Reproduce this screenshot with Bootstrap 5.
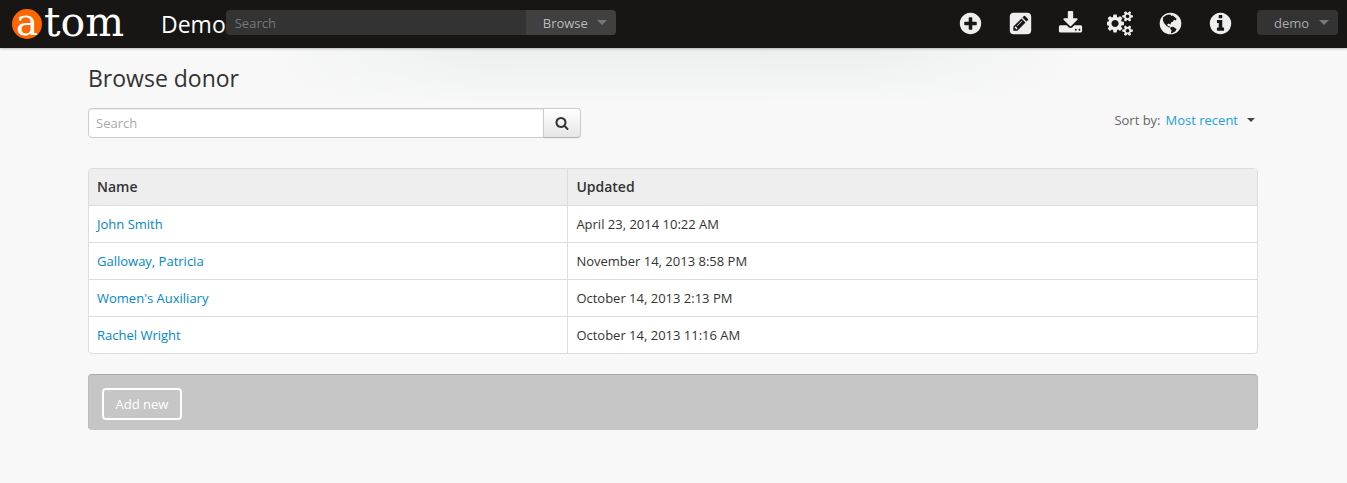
<!DOCTYPE html>
<html lang="en">
<head>
<meta charset="utf-8">
<meta name="viewport" content="width=device-width, initial-scale=1">
<title>Browse donor</title>
<link href="https://cdn.jsdelivr.net/npm/bootstrap@5.3.0/dist/css/bootstrap.min.css" rel="stylesheet">
<style>
body { font-family: "Open Sans", "Noto Sans", sans-serif; font-size: 13px; line-height: 20px; color: #333; background: #f8f8f8; }
a { text-decoration: none; color: #08c; }
.top-bar { background: #171614; height: 48px; padding: 0 9px 0 12px; box-shadow: 0 1px 2px rgba(0,0,0,.25); position: relative; z-index: 1; }
.logo { width: 120px; height: 48px; display: block; overflow: visible; }
.site-title { font-size: 23px; line-height: 32px; color: #fff; margin-left: 29px; }
.site-title:hover { color: #fff; }
.top-search { width: 390px; height: 25px; margin-bottom: 3px; }
.top-search input { background: #333; color: #ccc; border: 0; border-radius: 4px 0 0 4px; padding: 0 9px; min-width: 0; }
.top-search input::placeholder { color: #777; }
.dark-btn { border: 0; height: 25px; padding: 0 9px 0 17px; line-height: 24px; color: #aaa; background: #333; border-radius: 4px; }
.browse-btn { width: 90px; background: #404040; color: #bbb; border-radius: 0 4px 4px 0; }
.tri { width: 0; height: 0; border: 5px solid transparent; border-top-color: #777; border-bottom: 0; }
.user-btn { width: 81px; margin: 0 0 3px 12px; }
.icon-btn { width: 50px; height: 46px; margin-bottom: 2px; padding: 0; border: 0; background: none; color: #eee; }
.icon-btn svg { height: 25px; fill: currentColor; }
.glow { background: linear-gradient(90deg, #f8f8f8 20%, #f8f8f800 36%, #f8f8f800 64%, #f8f8f8 80%), linear-gradient(#eceeee, #f2f3f3 28px, #f8f8f8 55px); }
.page-area { max-width: 1195px; padding: 15px 13px 0 12px; }
h1 { font-size: 23px; line-height: 30px; margin: 0 0 15px; }
.list-search { width: 493px; max-width: 100%; height: 30px; }
.list-search input { border: 1px solid #ccc; border-radius: 4px 0 0 4px; padding: 0 7px; min-width: 0; background: #fff; box-shadow: inset 0 1px 1px rgba(0,0,0,.075); }
.list-search input::placeholder { color: #aaa; }
.list-search button { width: 38px; margin-left: -1px; border: 1px solid #ccc; border-bottom-color: #b3b3b3; border-radius: 0 4px 4px 0; padding: 0; background: linear-gradient(#fff, #e6e6e6); box-shadow: 0 1px 2px rgba(0,0,0,.05); }
.list-search svg { width: 14px; fill: #333; display: block; margin: 0 auto; }
.sort { color: #666; padding: 2px 3px 0 0; gap: 5px; }
.sort a { color: #1a9fdc; }
.sort .tri { border-width: 4px; border-top-color: #444; border-bottom: 0; margin-left: 4px; }
.donors { border: 1px solid #ddd; border-radius: 4px; background: #fff; overflow: hidden; margin: 30px 0 20px; }
.donors table { width: 100%; }
.donors th, .donors td { padding: 8px; border-top: 1px solid #ddd; }
.donors tr > * + * { border-left: 1px solid #ddd; }
.donors th { background: #eee; border-top: 0; font-size: 14px; font-weight: 600; }
.donors th:first-child { width: 41%; }
.actions { background: #c6c6c6; border: 1px solid #bcbcbc; border-color: #aaa #bcbcbc #c6c6c6; border-radius: 4px; padding: 13px; }
.add-btn { width: 80px; height: 32px; margin-bottom: -4px; border: 2px solid #fff; border-radius: 4px; background: none; color: #fff; padding: 0; display: block; }
.actions { min-height: 56px; }
</style>
</head>
<body>
<header class="top-bar d-flex align-items-center">
  <a href="#" aria-label="atom">
    <svg class="logo" viewBox="0 0 120 48" font-family="DejaVu Serif, serif" fill="#fff">
      <circle cx="15" cy="24" r="15" fill="#f60"/>
      <text x="4" y="35" font-size="37">a</text>
      <text x="32" y="36" font-size="41">tom</text>
    </svg>
  </a>
  <a class="site-title" href="#">Demo</a>
  <form class="top-search d-flex">
    <input class="flex-grow-1" type="text" placeholder="Search" aria-label="Global search">
    <button class="dark-btn browse-btn d-flex align-items-center justify-content-between" type="button">Browse <span class="tri"></span></button>
  </form>
  <nav class="d-flex align-items-center ms-auto">
    <button class="icon-btn" aria-label="Add"><svg viewBox="0 0 1792 1792"><path d="M1344 960v-128q0-26-19-45t-45-19h-256v-256q0-26-19-45t-45-19h-128q-26 0-45 19t-19 45v256h-256q-26 0-45 19t-19 45v128q0 26 19 45t45 19h256v256q0 26 19 45t45 19h128q26 0 45-19t19-45v-256h256q26 0 45-19t19-45zm320-64q0 209-103 385.5t-279.5 279.5-385.5 103-385.5-103-279.5-279.5-103-385.5 103-385.5 279.5-279.5 385.5-103 385.5 103 279.5 279.5 103 385.5z"/></svg></button>
    <button class="icon-btn" aria-label="Manage"><svg viewBox="0 0 1792 1792"><path fill-rule="evenodd" d="M416 128h960q288 0 288 288v960q0 288-288 288h-960q-288 0-288-288v-960q0-288 288-288zM384 1408h290l582-582-290-290-582 582zM1034 468l290 290 104-104q44-44 0-88l-202-202q-44-44-88 0zM480 1170l70-70 142 142-70 70h-62v-80h-80zM640 1044l340-340 34 34-340 340z"/></svg></button>
    <button class="icon-btn" aria-label="Import"><svg viewBox="0 0 1792 1792"><path d="M1344 1344q0-26-19-45t-45-19-45 19-19 45 19 45 45 19 45-19 19-45zm256 0q0-26-19-45t-45-19-45 19-19 45 19 45 45 19 45-19 19-45zm128-224v320q0 40-28 68t-68 28h-1472q-40 0-68-28t-28-68v-320q0-40 28-68t68-28h465l135 136q58 56 136 56t136-56l136-136h464q40 0 68 28t28 68zm-325-569q17 41-14 70l-448 448q-18 19-45 19t-45-19l-448-448q-31-29-14-70 17-39 59-39h256v-448q0-26 19-45t45-19h256q26 0 45 19t19 45v448h256q42 0 59 39z"/></svg></button>
    <button class="icon-btn" aria-label="Admin"><svg viewBox="0 0 1920 1792"><path d="M832 896q0-106-75-181t-181-75-181 75-75 181 75 181 181 75 181-75 75-181zm768 512q0-52-38-90t-90-38-90 38-38 90q0 53 37.500 90.500t90.500 37.500 90.500-37.500 37.500-90.500zm0-1024q0-52-38-90t-90-38-90 38-38 90q0 53 37.500 90.500t90.500 37.500 90.500-37.500 37.500-90.500zm-384 421v185q0 10-7 19.500t-16 10.500l-155 24q-11 35-32 76 34 48 90 115 7 11 7 20 0 12-7 19-23 30-82.500 89.500t-78.500 59.500q-11 0-21-7l-115-90q-37 19-77 31-11 108-23 155-7 24-30 24h-186q-11 0-20-7.500t-10-17.500l-23-153q-34-10-75-31l-118 89q-7 7-20 7-11 0-21-8-144-133-144-160 0-9 7-19 10-14 41-53t47-61q-23-44-35-82l-152-24q-10-1-17-9.500t-7-19.500v-185q0-10 7-19.500t16-10.500l155-24q11-35 32-76-34-48-90-115-7-11-7-20 0-12 7-20 22-30 82-89t79-59q11 0 21 7l115 90q34-18 77-32 11-108 23-154 7-24 30-24h186q11 0 20 7.500t10 17.500l23 153q34 10 75 31l118-89q8-7 20-7 11 0 21 8 144 133 144 160 0 8-7 19-12 16-42 54t-45 60q23 48 34 82l152 23q10 2 17 10.500t7 19.500zm640 533v140q0 16-149 31-12 27-30 52 51 113 51 138 0 4-4 7-122 71-124 71-8 0-46-47t-52-68q-20 2-30 2t-30-2q-14 21-52 68t-46 47q-2 0-124-71-4-3-4-7 0-25 51-138-18-25-30-52-149-15-149-31v-140q0-16 149-31 13-29 30-52-51-113-51-138 0-4 4-7 4-2 35-20t59-34 30-16q8 0 46 46.500t52 67.500q20-2 30-2t30 2q51-71 92-112l6-2q4 0 124 70 4 3 4 7 0 25-51 138 17 23 30 52 149 15 149 31zm0-1024v140q0 16-149 31-12 27-30 52 51 113 51 138 0 4-4 7-122 71-124 71-8 0-46-47t-52-68q-20 2-30 2t-30-2q-14 21-52 68t-46 47q-2 0-124-71-4-3-4-7 0-25 51-138-18-25-30-52-149-15-149-31v-140q0-16 149-31 13-29 30-52-51-113-51-138 0-4 4-7 4-2 35-20t59-34 30-16q8 0 46 46.500t52 67.500q20-2 30-2t30 2q51-71 92-112l6-2q4 0 124 70 4 3 4 7 0 25-51 138 17 23 30 52 149 15 149 31z"/></svg></button>
    <button class="icon-btn" aria-label="Language"><svg viewBox="0 0 25 25"><circle cx="12.500" cy="12.500" r="10.800"/><path fill="#171614" d="M5 6.500L8 4.200 11 3.400 13.500 4 12.500 5.200 15 4.400 16.500 6 18.500 7.500 18 9.500 15.800 8.800 15.200 10.400 13 11.600 12.400 13.400 10.300 12.400 9.200 13.500 10 15.200 11.500 15 12 16.600 10.600 16.300 8.300 14.800 6.200 12.200 5 9.800zM12.500 16.200L15 15.800 18.600 17.900 17.400 20.200 14.500 22 12.800 22.300 13.600 19.500 12.200 17.800z"/></svg></button>
    <button class="icon-btn" aria-label="Information"><svg viewBox="0 0 1792 1792"><path d="M1152 1376v-160q0-14-9-23t-23-9h-96v-512q0-14-9-23t-23-9h-320q-14 0-23 9t-9 23v160q0 14 9 23t23 9h96v320h-96q-14 0-23 9t-9 23v160q0 14 9 23t23 9h448q14 0 23-9t9-23zm-128-896v-160q0-14-9-23t-23-9h-192q-14 0-23 9t-9 23v160q0 14 9 23t23 9h192q14 0 23-9t9-23zm640 416q0 209-103 385.500t-279.500 279.500-385.500 103-385.500-103-279.500-279.500-103-385.500 103-385.500 279.500-279.500 385.500-103 385.500 103 279.500 279.500 103 385.500z"/></svg></button>
    <button class="dark-btn user-btn d-flex align-items-center justify-content-between">demo <span class="tri"></span></button>
  </nav>
</header>
<div class="glow">
  <main class="container-fluid page-area">
    <h1 class="fw-normal">Browse donor</h1>
    <div class="d-flex justify-content-between">
      <form class="list-search d-flex">
        <input class="flex-grow-1" type="text" placeholder="Search" aria-label="Search donors">
        <button type="submit" aria-label="Search"><svg viewBox="0 0 1792 1792"><path d="M1216 832q0-185-131.500-316.500t-316.500-131.500-316.500 131.500-131.500 316.500 131.500 316.500 316.500 131.500 316.500-131.500 131.500-316.500zm512 832q0 52-38 90t-90 38q-54 0-90-38l-343-342q-179 124-399 124-143 0-273.500-55.500t-225-150-150-225-55.500-273.500 55.500-273.500 150-225 225-150 273.500-55.500 273.500 55.500 225 150 150 225 55.500 273.500q0 220-124 399l343 343q37 37 37 90z"/></svg></button>
      </form>
      <div class="sort d-flex align-items-center align-self-start"><span>Sort by:</span> <a href="#">Most recent</a> <span class="tri"></span></div>
    </div>
    <div class="donors">
      <table>
        <thead><tr><th>Name</th><th>Updated</th></tr></thead>
        <tbody>
          <tr><td><a href="#">John Smith</a></td><td>April 23, 2014 10:22 AM</td></tr>
          <tr><td><a href="#">Galloway, Patricia</a></td><td>November 14, 2013 8:58 PM</td></tr>
          <tr><td><a href="#">Women's Auxiliary</a></td><td>October 14, 2013 2:13 PM</td></tr>
          <tr><td><a href="#">Rachel Wright</a></td><td>October 14, 2013 11:16 AM</td></tr>
        </tbody>
      </table>
    </div>
    <section class="actions"><button class="add-btn">Add new</button></section>
  </main>
</div>
<script src="https://cdn.jsdelivr.net/npm/bootstrap@5.3.0/dist/js/bootstrap.bundle.min.js"></script>
</body>
</html>
